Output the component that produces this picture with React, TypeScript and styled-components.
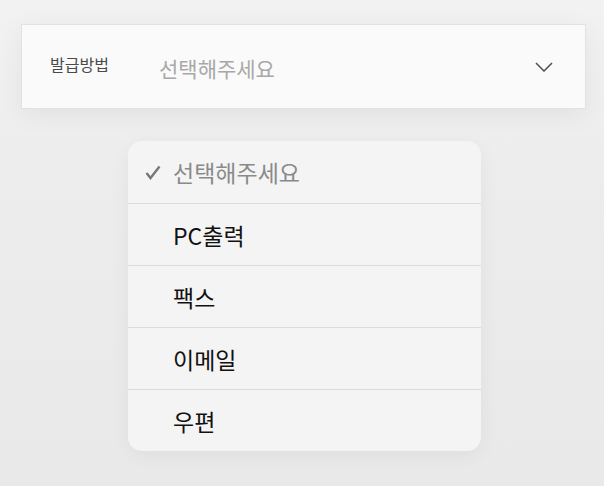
import React from "react";
import styled, { createGlobalStyle } from "styled-components";

const Global = createGlobalStyle`
  html, body { margin: 0; padding: 0; }
  body {
    background: #ebebeb;
    font-family: "Noto Sans CJK KR", "Noto Sans", sans-serif;
  }
`;

const Page = styled.div`
  width: 604px;
  height: 486px;
  box-sizing: border-box;
  padding: 24px 0 0 21px;
  background: linear-gradient(#f2f2f2 0px, #ececec 200px, #e9e9e9 486px);
  overflow: hidden;
`;

const SelectBox = styled.div`
  width: 565px;
  height: 85px;
  box-sizing: border-box;
  background: #fafafa;
  border: 1px solid #e2e2e2;
  box-shadow: 0 6px 24px rgba(0, 0, 0, 0.06);
  display: flex;
  align-items: center;
  padding: 0 32px 0 28px;
`;

const Label = styled.span`
  width: 109px;
  font-size: 16px;
  color: #4a4a4a;
  margin-top: -6px;
`;

const Placeholder = styled.span`
  flex: 1;
  font-size: 21px;
  color: #a8a8a8;
  margin-top: 2px;
`;

const Popup = styled.ul`
  list-style: none;
  margin: 32px 0 0 107px;
  padding: 0;
  width: 353px;
  background: #f4f4f4;
  border-radius: 14px;
  overflow: hidden;
  box-shadow: 0 4px 20px rgba(0, 0, 0, 0.05);
`;

const Option = styled.li<{ $muted?: boolean }>`
  height: 62px;
  box-sizing: border-box;
  display: flex;
  align-items: center;
  padding-left: 17px;
  font-size: 23px;
  color: ${(p) => (p.$muted ? "#8a8a8a" : "#111")};
  & + & {
    border-top: 1px solid #dcdcdc;
  }
`;

const CheckSlot = styled.span`
  width: 28px;
  display: flex;
  align-items: center;
`;

const options = ["PC출력", "팩스", "이메일", "우편"];

export default function App() {
  return (
    <Page>
      <Global />
      <SelectBox>
        <Label>발급방법</Label>
        <Placeholder>선택해주세요</Placeholder>
        <svg width="18" height="10" viewBox="0 0 18 10">
          <path d="M1 1 L9 9 L17 1" fill="none" stroke="#555" strokeWidth="1.6" />
        </svg>
      </SelectBox>
      <Popup>
        <Option $muted>
          <CheckSlot>
            <svg width="16" height="15" viewBox="0 0 16 15">
              <path d="M1.5 8 L5.5 13 L14.5 1.5" fill="none" stroke="#777" strokeWidth="2.4" />
            </svg>
          </CheckSlot>
          선택해주세요
        </Option>
        {options.map((o) => (
          <Option key={o}>
            <CheckSlot />
            {o}
          </Option>
        ))}
      </Popup>
    </Page>
  );
}
